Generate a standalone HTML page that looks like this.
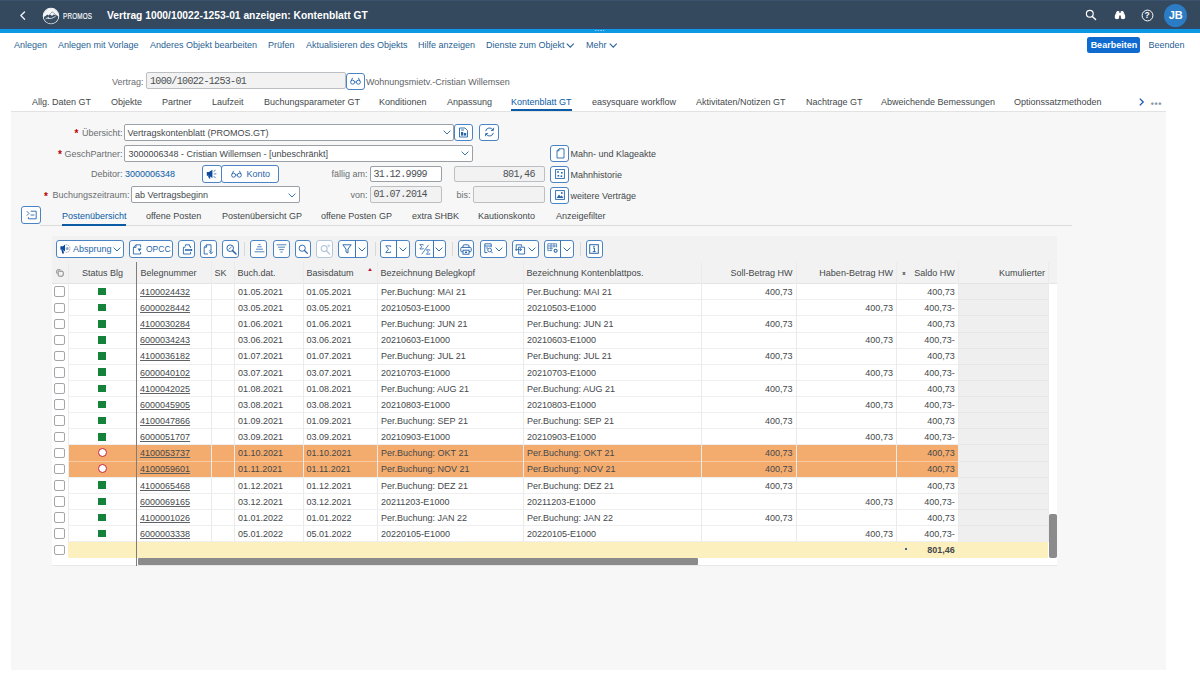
<!DOCTYPE html>
<html lang="de"><head><meta charset="utf-8"><title>Vertrag 1000/10022-1253-01 anzeigen: Kontenblatt GT</title>
<style>
*{box-sizing:border-box;margin:0;padding:0}
html,body{width:1200px;height:675px;overflow:hidden;background:#fff}
body{position:relative;font-family:"Liberation Sans",sans-serif;font-size:9px;color:#44484b;line-height:12px}
.a{position:absolute;white-space:nowrap}
.r{text-align:right}
.m{font-family:"Liberation Mono",monospace;font-size:10px;letter-spacing:-0.66px;color:#4d5154}
.lnk{color:#0a5aa6}
.tb{color:#2a5f94}
.lab{color:#6a6d70}
.req{color:#bb0000;font-weight:bold;font-size:10px}
.btn{position:absolute;border:1px solid #4a84c4;border-radius:3px;background:#fff;color:#2766ab}
.inp{position:absolute;border:1px solid #9aa0a6;border-radius:2px;background:#fff}
.ro{background:#f2f2f2;border-color:#bcbfc2}
.cb{position:absolute;width:11px;height:10.5px;border:1px solid #a3a6a9;border-radius:2px;background:#fff;left:54px}
.gs{position:absolute;width:7.8px;height:7.5px;background:#14823b;left:98.4px}
.oc{position:absolute;width:9px;height:9px;border:1.4px solid #c4233a;border-radius:50%;background:#fff;left:97.5px}
.c{position:absolute;white-space:nowrap;color:#44484b}
.u{text-decoration:underline;text-underline-offset:1px;text-decoration-thickness:0.8px;text-decoration-color:#5f6366}
.hl{position:absolute;height:1px;background:#efefef;left:68px;width:980px}
.vl{position:absolute;width:1px;background:#ebebeb}
svg{position:absolute;overflow:visible}
</style></head><body>

<div class="a" style="left:0;top:0;width:1200px;height:29.4px;background:#34495e"></div>
<div class="a" style="left:0;top:0;width:1200px;height:1.4px;background:#3b5370"></div>
<div class="a" style="left:0;top:26.5px;width:1200px;height:2.5px;background:#31486a"></div>
<div class="a" style="left:0;top:29.2px;width:1200px;height:3.7px;background:#0d99e2"></div>
<div class="a" style="left:594.8px;top:26px;font-size:6px;line-height:6px;letter-spacing:0.9px;color:#e8f4fd;font-weight:bold">....</div>
<svg style="left:19.3px;top:10.6px" width="7.4" height="9.2" viewBox="0 0 8 10"><path d="M6 1 L2 5 L6 9" fill="none" stroke="#eef2fb" stroke-width="1.5" stroke-linecap="round" stroke-linejoin="round"/></svg>
<svg style="left:42.2px;top:6.8px" width="18" height="18" viewBox="0 0 18 18"><defs><clipPath id="lc"><circle cx="9" cy="9" r="7.4"/></clipPath></defs><circle cx="9" cy="9" r="7.7" fill="#3a4e63" stroke="#f4f6f8" stroke-width="1.1"/><g clip-path="url(#lc)"><rect x="0" y="0" width="18" height="9.6" fill="#f4f6f8"/><path d="M0.5 12 L5.2 7.6 L6.6 8.6 L10.2 4.6 L12.6 6.6 L17.5 10.4 V18 H0.5 Z" fill="#3a4e63"/><path d="M7.4 7.8 L10.2 4.9 L12.4 6.8 L15 8.8 L11.6 7.6 L10 9 L8.8 7.8 Z" fill="#f4f6f8"/><path d="M3.6 11.8 L6.8 10.2 L5.8 11.6 Q9.5 12.2 13.6 9.4" fill="none" stroke="#f4f6f8" stroke-width="0.8"/></g></svg>
<div class="a" id="promos" style="left:63px;top:10px;font-size:9.5px;color:#f2f4f6;letter-spacing:0.3px;transform:scaleX(0.665);transform-origin:0 0;-webkit-text-stroke:0.2px #f2f4f6">PROMOS</div>
<div class="a" id="title" style="left:107px;top:8.6px;font-size:10.28px;font-weight:bold;color:#fff;line-height:14px">Vertrag 1000/10022-1253-01 anzeigen: Kontenblatt GT</div>
<svg style="left:1085px;top:9px" width="12" height="12" viewBox="0 0 12 12"><circle cx="4.8" cy="4.8" r="3.4" fill="none" stroke="#fff" stroke-width="1.2"/><path d="M7.4 7.4 L10.6 10.6" stroke="#fff" stroke-width="1.4" stroke-linecap="round"/></svg>
<svg style="left:1113.5px;top:9.5px" width="12" height="10" viewBox="0 0 12 10"><path d="M1.2 6 L3 1.5 L5 1.5 L5 6 M10.8 6 L9 1.5 L7 1.5 L7 6" fill="#fff" stroke="#fff" stroke-width="0.8"/><circle cx="3" cy="7" r="2.3" fill="#fff"/><circle cx="9" cy="7" r="2.3" fill="#fff"/><rect x="4.6" y="3" width="2.8" height="2.4" fill="#fff"/></svg>
<svg style="left:1141px;top:8.5px" width="13" height="13" viewBox="0 0 13 13"><circle cx="6.5" cy="6.5" r="5.4" fill="none" stroke="#fff" stroke-width="1"/></svg>
<div class="a" style="left:1144.6px;top:9.6px;font-size:8.5px;font-weight:bold;color:#fff;line-height:11px">?</div>
<div class="a" style="left:1164px;top:3.5px;width:23.4px;height:23.4px;border-radius:50%;background:#2b7bc5"></div>
<div class="a" style="left:1164px;top:8px;width:23.5px;text-align:center;font-size:11px;font-weight:bold;color:#fff;line-height:14px;letter-spacing:-0.1px">JB</div>
<div class="a tb" style="left:14px;top:38.9px">Anlegen</div>
<div class="a tb" style="left:58px;top:38.9px">Anlegen mit Vorlage</div>
<div class="a tb" style="left:150px;top:38.9px">Anderes Objekt bearbeiten</div>
<div class="a tb" style="left:268px;top:38.9px">Prüfen</div>
<div class="a tb" style="left:306px;top:38.9px">Aktualisieren des Objekts</div>
<div class="a tb" style="left:418px;top:38.9px">Hilfe anzeigen</div>
<div class="a tb" style="left:486px;top:38.9px">Dienste zum Objekt</div>
<div class="a tb" style="left:586px;top:38.9px">Mehr</div>
<svg style="left:566.2px;top:42.6px" width="8.5" height="5.3" viewBox="0 0 8 5"><path d="M0.7 0.7 L4 4 L7.3 0.7" fill="none" stroke="#2a5f94" stroke-width="1"/></svg>
<svg style="left:608.8px;top:42.6px" width="8.5" height="5.3" viewBox="0 0 8 5"><path d="M0.7 0.7 L4 4 L7.3 0.7" fill="none" stroke="#2a5f94" stroke-width="1"/></svg>
<div class="a" style="left:1087.4px;top:36.8px;width:53px;height:16px;border-radius:2.5px;background:#0f6bd0"></div>
<div class="a" style="left:1087.4px;top:39.3px;width:53px;text-align:center;font-weight:bold;color:#fff;font-size:9px">Bearbeiten</div>
<div class="a tb" style="left:1148.5px;top:38.8px">Beenden</div>
<div class="a lab r" style="left:80px;width:63.5px;top:75.5px">Vertrag:</div>
<div class="inp ro" style="left:146px;top:72.4px;width:200px;height:17px"></div>
<div class="a m" style="left:150px;top:75.6px">1000/10022-1253-01</div>
<div class="btn" style="left:346px;top:72.5px;width:18.5px;height:17.5px"></div>
<svg style="left:350px;top:77px" width="11" height="8" viewBox="0 0 11 8"><circle cx="2.6" cy="5.2" r="2" fill="none" stroke="#2766ab" stroke-width="0.9"/><circle cx="8.4" cy="5.2" r="2" fill="none" stroke="#2766ab" stroke-width="0.9"/><path d="M1 4.2 L2.6 0.8 M10 4.2 L8.4 0.8 M4.6 5 L6.4 5" fill="none" stroke="#2766ab" stroke-width="0.9"/></svg>
<div class="a" style="left:366px;top:75.5px;color:#606366">Wohnungsmietv.-Cristian Willemsen</div>
<div class="a " style="left:32px;top:95.5px">Allg. Daten GT</div>
<div class="a " style="left:111px;top:95.5px">Objekte</div>
<div class="a " style="left:162px;top:95.5px">Partner</div>
<div class="a " style="left:212px;top:95.5px">Laufzeit</div>
<div class="a " style="left:264px;top:95.5px">Buchungsparameter GT</div>
<div class="a " style="left:379px;top:95.5px">Konditionen</div>
<div class="a " style="left:447px;top:95.5px">Anpassung</div>
<div class="a lnk" style="left:511px;top:95.5px">Kontenblatt GT</div>
<div class="a " style="left:592px;top:95.5px">easysquare workflow</div>
<div class="a " style="left:696px;top:95.5px">Aktivitaten/Notizen GT</div>
<div class="a " style="left:806px;top:95.5px">Nachtrage GT</div>
<div class="a " style="left:881px;top:95.5px">Abweichende Bemessungen</div>
<div class="a " style="left:1014px;top:95.5px">Optionssatzmethoden</div>
<div class="a" style="left:511px;top:108.6px;width:61px;height:2.4px;background:#0a5aa6"></div>
<svg style="left:1139.4px;top:97.6px" width="5" height="8" viewBox="0 0 5 8"><path d="M0.8 0.6 L4.2 4 L0.8 7.4" fill="none" stroke="#1558ae" stroke-width="1.3"/></svg>
<div class="a" style="left:1150.8px;top:98.3px;font-size:9px;letter-spacing:0.55px;font-weight:bold;color:#8c96a8;line-height:12px">•••</div>
<div class="a" style="left:11px;top:111px;width:1154.5px;height:558.5px;background:#f7f7f7;border-top:1px solid #e2e2e2"></div>
<div class="a req" style="left:74.5px;top:127.5px">*</div>
<div class="a lab r" style="left:60px;width:62.5px;top:126.8px">Übersicht:</div>
<div class="inp" style="left:124px;top:124.3px;width:329.5px;height:16.5px"></div>
<div class="a" style="left:127.5px;top:126.8px">Vertragskontenblatt (PROMOS.GT)</div>
<svg style="left:442.5px;top:130px" width="8" height="5" viewBox="0 0 8 5"><path d="M0.6 0.6 L4 4 L7.4 0.6" fill="none" stroke="#2766ab" stroke-width="0.9"/></svg>
<div class="btn" style="left:453.6px;top:123.8px;width:19px;height:17.5px"></div>
<svg style="left:458px;top:127px" width="11" height="11" viewBox="0 0 11 11"><path d="M1.5 1 H7 L9.5 3.5 V10 H1.5 Z" fill="none" stroke="#2766ab" stroke-width="0.9"/><rect x="3" y="5" width="2.2" height="3.6" fill="#2766ab"/><rect x="5.8" y="6" width="2.4" height="2.6" fill="#2766ab"/><path d="M3 3 H6" stroke="#2766ab" stroke-width="0.9"/></svg>
<div class="btn" style="left:479.4px;top:123.8px;width:19.2px;height:17.5px"></div>
<svg style="left:484px;top:127.3px" width="11" height="10" viewBox="0 0 11 10"><path d="M1.6 4.2 A4 4 0 0 1 9 3 M9.4 5.8 A4 4 0 0 1 2 7" fill="none" stroke="#2766ab" stroke-width="0.95"/><path d="M9.4 0.8 V3.4 H6.9 M1.6 9.2 V6.6 H4.1" fill="none" stroke="#2766ab" stroke-width="0.95"/></svg>
<div class="a req" style="left:58px;top:148.5px">*</div>
<div class="a lab r" style="left:50px;width:72.5px;top:147.7px">GeschPartner:</div>
<div class="inp" style="left:124px;top:145px;width:348.6px;height:16.5px"></div>
<div class="a" style="left:128.5px;top:147.7px">3000006348 - Cristian Willemsen - [unbeschränkt]</div>
<svg style="left:461.3px;top:151px" width="8" height="5" viewBox="0 0 8 5"><path d="M0.6 0.6 L4 4 L7.4 0.6" fill="none" stroke="#2766ab" stroke-width="0.9"/></svg>
<div class="a lab r" style="left:60px;width:62.5px;top:168.3px">Debitor:</div>
<div class="a lnk" style="left:125px;top:168.3px">3000006348</div>
<div class="btn" style="left:202.2px;top:165px;width:19.4px;height:17.6px"></div>
<svg style="left:206px;top:169px" width="12" height="10" viewBox="0 0 12 10"><path d="M0.8 3 H3 L6.4 0.8 V9 L3 6.8 H0.8 Z" fill="#0f4a9e"/><path d="M2 6.8 L3 9.6 H4.4 L3.8 6.8" fill="#0f4a9e"/><path d="M7.6 2.4 L9.6 1.2 M7.8 4.9 H10.4 M7.6 7.4 L9.6 8.6" stroke="#2766ab" stroke-width="0.8" fill="none"/></svg>
<div class="btn" style="left:221.2px;top:165px;width:58.2px;height:17.6px"></div>
<svg style="left:231px;top:170px" width="11" height="8" viewBox="0 0 11 8"><circle cx="2.6" cy="5.2" r="2" fill="none" stroke="#2766ab" stroke-width="0.9"/><circle cx="8.4" cy="5.2" r="2" fill="none" stroke="#2766ab" stroke-width="0.9"/><path d="M1 4.2 L2.6 0.8 M10 4.2 L8.4 0.8 M4.6 5 L6.4 5" fill="none" stroke="#2766ab" stroke-width="0.9"/></svg>
<div class="a" style="left:246.5px;top:168.3px;color:#2766ab">Konto</div>
<div class="a lab r" style="left:300px;width:67.5px;top:168.3px">fällig am:</div>
<div class="inp" style="left:370px;top:165.5px;width:71.5px;height:16.5px"></div>
<div class="a m" style="left:373.5px;top:168.6px">31.12.9999</div>
<div class="inp ro" style="left:453.5px;top:165.5px;width:91px;height:16.5px"></div>
<div class="a m r" style="left:460px;width:74.8px;top:168.6px">801,46</div>
<div class="a req" style="left:44px;top:190.5px">*</div>
<div class="a lab r" style="left:40px;width:89.5px;top:189.3px">Buchungszeitraum:</div>
<div class="inp" style="left:131px;top:186.3px;width:168.5px;height:16.5px"></div>
<div class="a" style="left:135px;top:189.3px">ab Vertragsbeginn</div>
<svg style="left:287.5px;top:193px" width="8" height="5" viewBox="0 0 8 5"><path d="M0.6 0.6 L4 4 L7.4 0.6" fill="none" stroke="#2766ab" stroke-width="0.9"/></svg>
<div class="a lab r" style="left:300px;width:67.5px;top:189.3px">von:</div>
<div class="inp ro" style="left:370px;top:186.3px;width:71.5px;height:16.5px"></div>
<div class="a m" style="left:373.5px;top:189.4px">01.07.2014</div>
<div class="a lab r" style="left:440px;width:30.5px;top:189.3px">bis:</div>
<div class="inp ro" style="left:473px;top:186.3px;width:71.5px;height:16.5px"></div>
<div class="btn" style="left:550.3px;top:144.5px;width:19px;height:17.2px"></div>
<div class="a" style="left:570.4px;top:147.6px">Mahn- und Klageakte</div>
<div class="btn" style="left:550.3px;top:165.5px;width:19px;height:17.2px"></div>
<div class="a" style="left:570.4px;top:168.6px">Mahnhistorie</div>
<div class="btn" style="left:550.3px;top:186.5px;width:19px;height:17.2px"></div>
<div class="a" style="left:570.4px;top:189.6px">weitere Verträge</div>
<svg style="left:555.6px;top:148px" width="9" height="11" viewBox="0 0 9 11"><path d="M3 0.8 H8 V10 H1 V2.8 Z M3 0.8 V2.8 H1" fill="none" stroke="#2766ab" stroke-width="0.9"/></svg>
<svg style="left:555px;top:169.3px" width="10" height="10" viewBox="0 0 10 10"><rect x="0.6" y="0.6" width="8.8" height="8.8" fill="none" stroke="#2766ab" stroke-width="0.9"/><rect x="2.2" y="2.2" width="1.6" height="1.6" fill="#2766ab"/><rect x="6" y="3" width="1.6" height="1.6" fill="#2766ab"/><rect x="2.6" y="6" width="1.6" height="1.6" fill="#2766ab"/><rect x="5.6" y="6.4" width="1.6" height="1.6" fill="#2766ab"/></svg>
<svg style="left:555px;top:190.3px" width="10" height="10" viewBox="0 0 10 10"><rect x="0.6" y="0.6" width="8.8" height="8.8" fill="none" stroke="#2766ab" stroke-width="0.9"/><path d="M1.6 8 L4 4.6 L5.6 6.4 L6.8 5.4 L8.4 8 Z" fill="#2766ab"/><circle cx="6.8" cy="3" r="0.9" fill="#2766ab"/></svg>
<div class="btn" style="left:21px;top:206px;width:19.5px;height:18px"></div>
<svg style="left:25.5px;top:210px" width="11" height="10" viewBox="0 0 11 10"><path d="M0.8 1.2 L3 3.4 L0.8 5.6" fill="none" stroke="#2766ab" stroke-width="0.9"/><path d="M4.6 1.2 H10.2 V8.8 H2.4 V7.2 M4.6 5 H8.4" fill="none" stroke="#2766ab" stroke-width="0.9"/></svg>
<div class="a lnk" style="left:62px;top:209.9px">Postenübersicht</div>
<div class="a " style="left:146px;top:209.9px">offene Posten</div>
<div class="a " style="left:222px;top:209.9px">Postenübersicht GP</div>
<div class="a " style="left:321px;top:209.9px">offene Posten GP</div>
<div class="a " style="left:412px;top:209.9px">extra SHBK</div>
<div class="a " style="left:478px;top:209.9px">Kautionskonto</div>
<div class="a " style="left:556px;top:209.9px">Anzeigefilter</div>
<div class="a" style="left:40px;top:225px;width:1032px;height:1px;background:#dcdcdc"></div>
<div class="a" style="left:62px;top:223.5px;width:63.5px;height:2.3px;background:#0a5aa6"></div>
<div class="a" style="left:52px;top:236px;width:1005px;height:26px;background:#f2f2f2"></div>
<div class="btn" style="left:56.3px;top:240.2px;width:68.0px;height:17.5px;border-color:#4a84c4"></div>
<svg style="left:59.5px;top:243.8px" width="11" height="10" viewBox="0 0 11 10"><path d="M0.4 2.2 H3 L5 0.6 V7.4 L3 5.8 H0.4 Z" fill="#0f4a9e"/><path d="M1.4 5.8 L2.2 9.6 H4 L3.4 5.8" fill="#0f4a9e"/><path d="M5.6 1 Q8.4 0.4 9.6 3 Q10.6 5.6 8.6 7.6 Q7 8.8 5.6 8" fill="none" stroke="#8fa6c4" stroke-width="1" stroke-dasharray="1.6 0.7"/><circle cx="7.2" cy="4.4" r="1.5" fill="#8fa6c4"/></svg>
<div class="a" style="left:73px;top:242.8px;color:#2766ab">Absprung</div>
<svg style="left:113.3px;top:246.8px" width="8" height="5" viewBox="0 0 8 5"><path d="M0.6 0.6 L4 4 L7.4 0.6" fill="none" stroke="#2766ab" stroke-width="0.95"/></svg>
<div class="btn" style="left:129.2px;top:240.2px;width:44.0px;height:17.5px;border-color:#4a84c4"></div>
<svg style="left:131.8px;top:243.6px" width="11" height="11" viewBox="0 0 11 11"><path d="M4 0.8 H8.6 V3.4 M8.6 8 V10 H1.4 V3.4 L4 0.8 V3.4 H1.4" fill="none" stroke="#2766ab" stroke-width="0.9"/><path d="M5.6 4.6 L7.4 7.4 L9.6 4.6 Z" fill="#2766ab"/></svg>
<div class="a" style="left:146px;top:242.8px;color:#2766ab;font-size:8.5px">OPCC</div>
<div class="btn" style="left:178.3px;top:240.2px;width:16.5px;height:17.5px;border-color:#4a84c4"></div>
<svg style="left:181.5px;top:243.5px" width="11" height="11" viewBox="0 0 11 11"><path d="M3.4 2.4 V0.8 H7.6 V2.4 M1.4 3.2 H3.4 M1.4 3.2 V10 H8.6 V7.8 M7.6 2.4 H8.6 V4" fill="none" stroke="#2766ab" stroke-width="0.9"/><path d="M3.2 5 H10.2 V7 H3.2 Z" fill="#2766ab"/><path d="M4 6 H9" stroke="#fff" stroke-width="0.5"/></svg>
<div class="btn" style="left:200px;top:240.2px;width:16.8px;height:17.5px;border-color:#4a84c4"></div>
<svg style="left:203.3px;top:243.5px" width="11" height="11" viewBox="0 0 11 11"><path d="M8 6 V0.8 H3.6 L1.2 3.2 V10 H5" fill="none" stroke="#2766ab" stroke-width="0.9"/><path d="M3.6 0.8 V3.2 H1.2" fill="none" stroke="#2766ab" stroke-width="0.9"/><path d="M8 5.6 V9.6 M6.2 7.8 L8 9.8 L9.8 7.8 M6.2 6 L8 8" fill="none" stroke="#2766ab" stroke-width="0.8"/></svg>
<div class="btn" style="left:222.2px;top:240.2px;width:17.0px;height:17.5px;border-color:#4a84c4"></div>
<svg style="left:225.5px;top:243.8px" width="11" height="11" viewBox="0 0 11 11"><circle cx="4.2" cy="4.2" r="3.3" fill="none" stroke="#2766ab" stroke-width="1"/><path d="M6.6 6.6 L10 10" stroke="#2766ab" stroke-width="1.5" stroke-linecap="round"/><path d="M2.6 5.4 L5.6 2.8" stroke="#2766ab" stroke-width="0.8"/></svg>
<div class="a" style="left:244.3px;top:241.5px;width:1px;height:14.5px;background:#d9d9d9"></div>
<div class="btn" style="left:250.3px;top:240.2px;width:17.2px;height:17.5px;border-color:#4a84c4"></div>
<svg style="left:253.6px;top:244.4px" width="11" height="9" viewBox="0 0 11 9"><path d="M4.4 0.6 H6.6 M3.2 2.8 H7.8 M2 5.2 H9 M0.6 7.8 H10.4" stroke="#2766ab" stroke-width="0.8" fill="none"/></svg>
<div class="btn" style="left:272.5px;top:240.2px;width:17.1px;height:17.5px;border-color:#4a84c4"></div>
<svg style="left:275.6px;top:244.4px" width="11" height="9" viewBox="0 0 11 9"><path d="M0.6 0.8 H10.4 M2 3.2 H9 M3.2 5.6 H7.8 M4.4 8 H6.6" stroke="#2766ab" stroke-width="0.8" fill="none"/></svg>
<div class="btn" style="left:294.7px;top:240.2px;width:16.7px;height:17.5px;border-color:#4a84c4"></div>
<svg style="left:298px;top:243.8px" width="11" height="11" viewBox="0 0 11 11"><circle cx="4.2" cy="4.2" r="3.1" fill="none" stroke="#2766ab" stroke-width="0.95"/><path d="M6.5 6.5 L9.4 9.4" stroke="#2766ab" stroke-width="1.3" stroke-linecap="round"/></svg>
<div class="btn" style="left:316.3px;top:240.2px;width:16.3px;height:17.5px;border-color:#b5c7dc"></div>
<svg style="left:319.6px;top:243.8px" width="11" height="11" viewBox="0 0 11 11"><circle cx="4.2" cy="4.6" r="3" fill="none" stroke="#b5c7dc" stroke-width="1.1"/><path d="M6.4 6.8 L9.6 10" stroke="#b5c7dc" stroke-width="1.4" stroke-linecap="round"/><path d="M8.8 0.4 V3.4 M7.3 1.9 H10.3" stroke="#b5c7dc" stroke-width="0.8"/></svg>
<div class="btn" style="left:338.3px;top:240.2px;width:30.1px;height:17.5px;border-color:#4a84c4"></div>
<div class="a" style="left:354.7px;top:240.2px;width:1px;height:17.5px;background:#3b78b8"></div>
<svg style="left:341.8px;top:244.2px" width="10" height="10" viewBox="0 0 10 10"><path d="M0.8 0.8 H9.2 L6 5 V9 L4 8 V5 Z" fill="none" stroke="#2766ab" stroke-width="0.95" stroke-linejoin="round"/></svg>
<svg style="left:357.6px;top:246.8px" width="8" height="5" viewBox="0 0 8 5"><path d="M0.6 0.6 L4 4 L7.4 0.6" fill="none" stroke="#2766ab" stroke-width="0.95"/></svg>
<div class="a" style="left:374.7px;top:241.5px;width:1px;height:14.5px;background:#d9d9d9"></div>
<div class="btn" style="left:380px;top:240.2px;width:30.4px;height:17.5px;border-color:#4a84c4"></div>
<div class="a" style="left:396.3px;top:240.2px;width:1px;height:17.5px;background:#3b78b8"></div>
<svg style="left:385px;top:244.6px" width="6.4" height="8.4" viewBox="0 0 8 10"><path d="M7 2.2 V0.8 H1 L4.4 5 L1 9.2 H7 V7.8" fill="none" stroke="#2766ab" stroke-width="1.1" stroke-linejoin="miter"/></svg>
<svg style="left:399.4px;top:246.8px" width="8" height="5" viewBox="0 0 8 5"><path d="M0.6 0.6 L4 4 L7.4 0.6" fill="none" stroke="#2766ab" stroke-width="0.95"/></svg>
<div class="btn" style="left:415.3px;top:240.2px;width:30.6px;height:17.5px;border-color:#4a84c4"></div>
<div class="a" style="left:432.5px;top:240.2px;width:1px;height:17.5px;background:#3b78b8"></div>
<svg style="left:418.5px;top:243.6px" width="12" height="11" viewBox="0 0 12 11"><path d="M4.2 1.4 V0.6 H0.8 L2.8 2.8 L0.8 5 H4.2 V4.2" fill="none" stroke="#2766ab" stroke-width="0.8"/><path d="M9.6 0.8 L2.8 10.2" stroke="#2766ab" stroke-width="0.8"/><path d="M10.8 6.6 V5.8 H7.4 L9.4 8 L7.4 10.2 H10.8 V9.4" fill="none" stroke="#2766ab" stroke-width="0.8"/></svg>
<svg style="left:435.4px;top:246.8px" width="8" height="5" viewBox="0 0 8 5"><path d="M0.6 0.6 L4 4 L7.4 0.6" fill="none" stroke="#2766ab" stroke-width="0.95"/></svg>
<div class="a" style="left:451.7px;top:241.5px;width:1px;height:14.5px;background:#d9d9d9"></div>
<div class="btn" style="left:457.5px;top:240.2px;width:16.8px;height:17.5px;border-color:#4a84c4"></div>
<svg style="left:460.4px;top:243.6px" width="12" height="11" viewBox="0 0 12 11"><path d="M3 3.4 V2 Q3 0.8 4.2 0.8 H7.8 Q9 0.8 9 2 V3.4" fill="none" stroke="#2766ab" stroke-width="0.95"/><rect x="0.8" y="3.4" width="10.4" height="4.4" rx="1" fill="none" stroke="#2766ab" stroke-width="0.95"/><rect x="3" y="6.2" width="6" height="4" fill="#fff" stroke="#2766ab" stroke-width="0.95"/><rect x="5" y="7.6" width="2" height="1.4" fill="#2766ab"/></svg>
<div class="btn" style="left:479.7px;top:240.2px;width:27.1px;height:17.5px;border-color:#4a84c4"></div>
<svg style="left:484px;top:243.4px" width="9" height="11" viewBox="0 0 9 11"><path d="M0.8 0.8 H7.2 M0.8 0.8 V9.6 H3.4 M7.2 0.8 V4.2 M0.8 3 H7.2 M2.2 5 H4" fill="none" stroke="#2766ab" stroke-width="0.9"/><circle cx="5.6" cy="7" r="1.9" fill="none" stroke="#2766ab" stroke-width="0.85"/><path d="M7 8.4 L8.6 10.2" stroke="#2766ab" stroke-width="1"/></svg>
<svg style="left:495.4px;top:246.8px" width="8" height="5" viewBox="0 0 8 5"><path d="M0.6 0.6 L4 4 L7.4 0.6" fill="none" stroke="#2766ab" stroke-width="0.95"/></svg>
<div class="btn" style="left:511.7px;top:240.2px;width:27.1px;height:17.5px;border-color:#4a84c4"></div>
<svg style="left:515px;top:243.6px" width="11" height="11" viewBox="0 0 11 11"><path d="M1.2 7 V0.8 H6.6 V2.6" fill="none" stroke="#2766ab" stroke-width="0.9"/><path d="M3.6 3.2 H9.6 V10 H3.6 Z" fill="none" stroke="#2766ab" stroke-width="0.9"/><path d="M0.4 5.6 H6.4 M4.8 4 L6.6 5.6 L4.8 7.2" fill="none" stroke="#2766ab" stroke-width="0.85"/></svg>
<svg style="left:527.6px;top:246.8px" width="8" height="5" viewBox="0 0 8 5"><path d="M0.6 0.6 L4 4 L7.4 0.6" fill="none" stroke="#2766ab" stroke-width="0.95"/></svg>
<div class="btn" style="left:543.8px;top:240.2px;width:30.5px;height:17.5px;border-color:#4a84c4"></div>
<div class="a" style="left:560px;top:240.2px;width:1px;height:17.5px;background:#3b78b8"></div>
<svg style="left:546.6px;top:243.4px" width="12" height="11" viewBox="0 0 12 11"><path d="M0.8 0.8 H9.6 V4.4 M0.8 0.8 V7.6 H5 M0.8 3 H9.6 M0.8 5.2 H6 M4 0.8 V7.6 M7 0.8 V4.6" fill="none" stroke="#2766ab" stroke-width="0.7"/><circle cx="8.6" cy="7.8" r="1.5" fill="#fff" stroke="#2766ab" stroke-width="1.1"/></svg>
<svg style="left:563.2px;top:246.8px" width="8" height="5" viewBox="0 0 8 5"><path d="M0.6 0.6 L4 4 L7.4 0.6" fill="none" stroke="#2766ab" stroke-width="0.95"/></svg>
<div class="a" style="left:580px;top:241.5px;width:1px;height:14.5px;background:#d9d9d9"></div>
<div class="btn" style="left:585.8px;top:240.2px;width:16.8px;height:17.5px;border-color:#4a84c4"></div>
<svg style="left:589.4px;top:243.8px" width="10" height="10" viewBox="0 0 10 10"><rect x="0.7" y="0.7" width="8.6" height="8.6" fill="none" stroke="#2766ab" stroke-width="1"/><path d="M4 4 H5.4 V7.6 M3.8 7.6 H6.6" fill="none" stroke="#2766ab" stroke-width="1"/><rect x="4.4" y="1.9" width="1.2" height="1.2" fill="#2766ab"/></svg>
<div class="a" style="left:52px;top:262px;width:1005px;height:304.1px;background:#fff;border-bottom:1px solid #e8e8e8"></div>
<div class="a" style="left:52px;top:262px;width:1005px;height:21.6px;background:#f2f2f2;border-bottom:1px solid #e4e4e4"></div>
<div class="a" style="left:958px;top:283.6px;width:90px;height:258.1px;background:#efefef"></div>
<div class="a" style="left:68px;top:444.9px;width:890px;height:32.3px;background:#f4ac6e"></div>
<div class="a" style="left:68px;top:541.7px;width:980px;height:16.1px;background:#fdf0bf"></div>
<div class="hl" style="top:299.2px;background:#efefef"></div>
<div class="hl" style="top:299.2px;background:#e7e7e7;left:958px;width:90px"></div>
<div class="hl" style="top:315.4px;background:#efefef"></div>
<div class="hl" style="top:315.4px;background:#e7e7e7;left:958px;width:90px"></div>
<div class="hl" style="top:331.5px;background:#efefef"></div>
<div class="hl" style="top:331.5px;background:#e7e7e7;left:958px;width:90px"></div>
<div class="hl" style="top:347.6px;background:#efefef"></div>
<div class="hl" style="top:347.6px;background:#e7e7e7;left:958px;width:90px"></div>
<div class="hl" style="top:363.8px;background:#efefef"></div>
<div class="hl" style="top:363.8px;background:#e7e7e7;left:958px;width:90px"></div>
<div class="hl" style="top:379.9px;background:#efefef"></div>
<div class="hl" style="top:379.9px;background:#e7e7e7;left:958px;width:90px"></div>
<div class="hl" style="top:396.0px;background:#efefef"></div>
<div class="hl" style="top:396.0px;background:#e7e7e7;left:958px;width:90px"></div>
<div class="hl" style="top:412.1px;background:#efefef"></div>
<div class="hl" style="top:412.1px;background:#e7e7e7;left:958px;width:90px"></div>
<div class="hl" style="top:428.3px;background:#efefef"></div>
<div class="hl" style="top:428.3px;background:#e7e7e7;left:958px;width:90px"></div>
<div class="hl" style="top:444.4px;background:#efefef"></div>
<div class="hl" style="top:444.4px;background:#e7e7e7;left:958px;width:90px"></div>
<div class="hl" style="top:460.5px;background:#efefef"></div>
<div class="hl" style="top:460.5px;background:#e7e7e7;left:958px;width:90px"></div>
<div class="hl" style="top:460.5px;background:#f8caa2;width:890px"></div>
<div class="hl" style="top:476.7px;background:#efefef"></div>
<div class="hl" style="top:476.7px;background:#e7e7e7;left:958px;width:90px"></div>
<div class="hl" style="top:492.8px;background:#efefef"></div>
<div class="hl" style="top:492.8px;background:#e7e7e7;left:958px;width:90px"></div>
<div class="hl" style="top:508.9px;background:#efefef"></div>
<div class="hl" style="top:508.9px;background:#e7e7e7;left:958px;width:90px"></div>
<div class="hl" style="top:525.0px;background:#efefef"></div>
<div class="hl" style="top:525.0px;background:#e7e7e7;left:958px;width:90px"></div>
<div class="hl" style="top:541.2px;background:#efefef"></div>
<div class="vl" style="left:68px;top:262px;height:279.7px"></div>
<div class="vl" style="left:211px;top:262px;height:279.7px"></div>
<div class="vl" style="left:234px;top:262px;height:279.7px"></div>
<div class="vl" style="left:303px;top:262px;height:279.7px"></div>
<div class="vl" style="left:377px;top:262px;height:279.7px"></div>
<div class="vl" style="left:523px;top:262px;height:279.7px"></div>
<div class="vl" style="left:701px;top:262px;height:279.7px"></div>
<div class="vl" style="left:795.6px;top:262px;height:279.7px"></div>
<div class="vl" style="left:896.4px;top:262px;height:279.7px"></div>
<div class="vl" style="left:957.8px;top:262px;height:279.7px"></div>
<div class="vl" style="left:1048px;top:262px;height:279.7px"></div>
<div class="vl" style="left:136.3px;top:262px;height:303.6px;background:#7d7d7d"></div>
<svg style="left:55.5px;top:268.5px" width="8" height="8" viewBox="0 0 8 8"><rect x="2.2" y="2.2" width="5" height="5" rx="1" fill="#f2f2f2" stroke="#777" stroke-width="0.9"/><path d="M0.8 4.6 V1.6 Q0.8 0.8 1.6 0.8 H4.6" fill="none" stroke="#777" stroke-width="0.9"/></svg>
<div class="c" style="left:68px;width:69px;text-align:center;top:267px">Status Blg</div>
<div class="c" style="left:140.5px;top:267px">Belegnummer</div>
<div class="c" style="left:214.5px;top:267px">SK</div>
<div class="c" style="left:237.5px;top:267px">Buch.dat.</div>
<div class="c" style="left:306.5px;top:267px">Basisdatum</div>
<div class="c" style="left:380.5px;top:267px">Bezeichnung Belegkopf</div>
<div class="c" style="left:526.5px;top:267px">Bezeichnung Kontenblattpos.</div>
<div class="c r" style="left:701px;width:91.60000000000002px;top:267px">Soll-Betrag HW</div>
<div class="c r" style="left:795.6px;width:97.29999999999995px;top:267px">Haben-Betrag HW</div>
<div class="c r" style="left:896.4px;width:58.39999999999998px;top:267px">Saldo HW</div>
<div class="c r" style="left:957.8px;width:87.20000000000005px;top:267px">Kumulierter</div>
<svg style="left:367.5px;top:267.5px" width="4" height="3" viewBox="0 0 5 4"><path d="M0 4 L2.5 0 L5 4 Z" fill="#c0142e"/></svg>
<div class="c" style="left:902.2px;top:267px;font-size:6px;font-weight:bold;color:#333">x</div>
<div class="cb" style="top:286.4px"></div>
<div class="gs" style="top:287.8px"></div>
<div class="c u" style="left:140px;top:285.9px">4100024432</div>
<div class="c" style="left:238px;top:285.9px">01.05.2021</div>
<div class="c" style="left:306.5px;top:285.9px">01.05.2021</div>
<div class="c" style="left:381px;top:285.9px">Per.Buchung: MAI 21</div>
<div class="c" style="left:527px;top:285.9px">Per.Buchung: MAI 21</div>
<div class="c r" style="left:701px;width:91.60000000000002px;top:285.9px">400,73</div>
<div class="c r" style="left:896.4px;width:58.39999999999998px;top:285.9px">400,73</div>
<div class="cb" style="top:302.5px"></div>
<div class="gs" style="top:303.9px"></div>
<div class="c u" style="left:140px;top:302.0px">6000028442</div>
<div class="c" style="left:238px;top:302.0px">03.05.2021</div>
<div class="c" style="left:306.5px;top:302.0px">03.05.2021</div>
<div class="c" style="left:381px;top:302.0px">20210503-E1000</div>
<div class="c" style="left:527px;top:302.0px">20210503-E1000</div>
<div class="c r" style="left:795.6px;width:97.29999999999995px;top:302.0px">400,73</div>
<div class="c r" style="left:896.4px;width:58.39999999999998px;top:302.0px">400,73-</div>
<div class="cb" style="top:318.7px"></div>
<div class="gs" style="top:320.1px"></div>
<div class="c u" style="left:140px;top:318.2px">4100030284</div>
<div class="c" style="left:238px;top:318.2px">01.06.2021</div>
<div class="c" style="left:306.5px;top:318.2px">01.06.2021</div>
<div class="c" style="left:381px;top:318.2px">Per.Buchung: JUN 21</div>
<div class="c" style="left:527px;top:318.2px">Per.Buchung: JUN 21</div>
<div class="c r" style="left:701px;width:91.60000000000002px;top:318.2px">400,73</div>
<div class="c r" style="left:896.4px;width:58.39999999999998px;top:318.2px">400,73</div>
<div class="cb" style="top:334.8px"></div>
<div class="gs" style="top:336.2px"></div>
<div class="c u" style="left:140px;top:334.3px">6000034243</div>
<div class="c" style="left:238px;top:334.3px">03.06.2021</div>
<div class="c" style="left:306.5px;top:334.3px">03.06.2021</div>
<div class="c" style="left:381px;top:334.3px">20210603-E1000</div>
<div class="c" style="left:527px;top:334.3px">20210603-E1000</div>
<div class="c r" style="left:795.6px;width:97.29999999999995px;top:334.3px">400,73</div>
<div class="c r" style="left:896.4px;width:58.39999999999998px;top:334.3px">400,73-</div>
<div class="cb" style="top:350.9px"></div>
<div class="gs" style="top:352.3px"></div>
<div class="c u" style="left:140px;top:350.4px">4100036182</div>
<div class="c" style="left:238px;top:350.4px">01.07.2021</div>
<div class="c" style="left:306.5px;top:350.4px">01.07.2021</div>
<div class="c" style="left:381px;top:350.4px">Per.Buchung: JUL 21</div>
<div class="c" style="left:527px;top:350.4px">Per.Buchung: JUL 21</div>
<div class="c r" style="left:701px;width:91.60000000000002px;top:350.4px">400,73</div>
<div class="c r" style="left:896.4px;width:58.39999999999998px;top:350.4px">400,73</div>
<div class="cb" style="top:367.1px"></div>
<div class="gs" style="top:368.4px"></div>
<div class="c u" style="left:140px;top:366.6px">6000040102</div>
<div class="c" style="left:238px;top:366.6px">03.07.2021</div>
<div class="c" style="left:306.5px;top:366.6px">03.07.2021</div>
<div class="c" style="left:381px;top:366.6px">20210703-E1000</div>
<div class="c" style="left:527px;top:366.6px">20210703-E1000</div>
<div class="c r" style="left:795.6px;width:97.29999999999995px;top:366.6px">400,73</div>
<div class="c r" style="left:896.4px;width:58.39999999999998px;top:366.6px">400,73-</div>
<div class="cb" style="top:383.2px"></div>
<div class="gs" style="top:384.6px"></div>
<div class="c u" style="left:140px;top:382.7px">4100042025</div>
<div class="c" style="left:238px;top:382.7px">01.08.2021</div>
<div class="c" style="left:306.5px;top:382.7px">01.08.2021</div>
<div class="c" style="left:381px;top:382.7px">Per.Buchung: AUG 21</div>
<div class="c" style="left:527px;top:382.7px">Per.Buchung: AUG 21</div>
<div class="c r" style="left:701px;width:91.60000000000002px;top:382.7px">400,73</div>
<div class="c r" style="left:896.4px;width:58.39999999999998px;top:382.7px">400,73</div>
<div class="cb" style="top:399.3px"></div>
<div class="gs" style="top:400.7px"></div>
<div class="c u" style="left:140px;top:398.8px">6000045905</div>
<div class="c" style="left:238px;top:398.8px">03.08.2021</div>
<div class="c" style="left:306.5px;top:398.8px">03.08.2021</div>
<div class="c" style="left:381px;top:398.8px">20210803-E1000</div>
<div class="c" style="left:527px;top:398.8px">20210803-E1000</div>
<div class="c r" style="left:795.6px;width:97.29999999999995px;top:398.8px">400,73</div>
<div class="c r" style="left:896.4px;width:58.39999999999998px;top:398.8px">400,73-</div>
<div class="cb" style="top:415.4px"></div>
<div class="gs" style="top:416.8px"></div>
<div class="c u" style="left:140px;top:414.9px">4100047866</div>
<div class="c" style="left:238px;top:414.9px">01.09.2021</div>
<div class="c" style="left:306.5px;top:414.9px">01.09.2021</div>
<div class="c" style="left:381px;top:414.9px">Per.Buchung: SEP 21</div>
<div class="c" style="left:527px;top:414.9px">Per.Buchung: SEP 21</div>
<div class="c r" style="left:701px;width:91.60000000000002px;top:414.9px">400,73</div>
<div class="c r" style="left:896.4px;width:58.39999999999998px;top:414.9px">400,73</div>
<div class="cb" style="top:431.6px"></div>
<div class="gs" style="top:433.0px"></div>
<div class="c u" style="left:140px;top:431.1px">6000051707</div>
<div class="c" style="left:238px;top:431.1px">03.09.2021</div>
<div class="c" style="left:306.5px;top:431.1px">03.09.2021</div>
<div class="c" style="left:381px;top:431.1px">20210903-E1000</div>
<div class="c" style="left:527px;top:431.1px">20210903-E1000</div>
<div class="c r" style="left:795.6px;width:97.29999999999995px;top:431.1px">400,73</div>
<div class="c r" style="left:896.4px;width:58.39999999999998px;top:431.1px">400,73-</div>
<div class="cb" style="top:447.7px"></div>
<div class="oc" style="top:448.3px"></div>
<div class="c u" style="left:140px;top:447.2px">4100053737</div>
<div class="c" style="left:238px;top:447.2px">01.10.2021</div>
<div class="c" style="left:306.5px;top:447.2px">01.10.2021</div>
<div class="c" style="left:381px;top:447.2px">Per.Buchung: OKT 21</div>
<div class="c" style="left:527px;top:447.2px">Per.Buchung: OKT 21</div>
<div class="c r" style="left:701px;width:91.60000000000002px;top:447.2px">400,73</div>
<div class="c r" style="left:896.4px;width:58.39999999999998px;top:447.2px">400,73</div>
<div class="cb" style="top:463.8px"></div>
<div class="oc" style="top:464.4px"></div>
<div class="c u" style="left:140px;top:463.3px">4100059601</div>
<div class="c" style="left:238px;top:463.3px">01.11.2021</div>
<div class="c" style="left:306.5px;top:463.3px">01.11.2021</div>
<div class="c" style="left:381px;top:463.3px">Per.Buchung: NOV 21</div>
<div class="c" style="left:527px;top:463.3px">Per.Buchung: NOV 21</div>
<div class="c r" style="left:701px;width:91.60000000000002px;top:463.3px">400,73</div>
<div class="c r" style="left:896.4px;width:58.39999999999998px;top:463.3px">400,73</div>
<div class="cb" style="top:480.0px"></div>
<div class="gs" style="top:481.4px"></div>
<div class="c u" style="left:140px;top:479.5px">4100065468</div>
<div class="c" style="left:238px;top:479.5px">01.12.2021</div>
<div class="c" style="left:306.5px;top:479.5px">01.12.2021</div>
<div class="c" style="left:381px;top:479.5px">Per.Buchung: DEZ 21</div>
<div class="c" style="left:527px;top:479.5px">Per.Buchung: DEZ 21</div>
<div class="c r" style="left:701px;width:91.60000000000002px;top:479.5px">400,73</div>
<div class="c r" style="left:896.4px;width:58.39999999999998px;top:479.5px">400,73</div>
<div class="cb" style="top:496.1px"></div>
<div class="gs" style="top:497.5px"></div>
<div class="c u" style="left:140px;top:495.6px">6000069165</div>
<div class="c" style="left:238px;top:495.6px">03.12.2021</div>
<div class="c" style="left:306.5px;top:495.6px">03.12.2021</div>
<div class="c" style="left:381px;top:495.6px">20211203-E1000</div>
<div class="c" style="left:527px;top:495.6px">20211203-E1000</div>
<div class="c r" style="left:795.6px;width:97.29999999999995px;top:495.6px">400,73</div>
<div class="c r" style="left:896.4px;width:58.39999999999998px;top:495.6px">400,73-</div>
<div class="cb" style="top:512.2px"></div>
<div class="gs" style="top:513.6px"></div>
<div class="c u" style="left:140px;top:511.7px">4100001026</div>
<div class="c" style="left:238px;top:511.7px">01.01.2022</div>
<div class="c" style="left:306.5px;top:511.7px">01.01.2022</div>
<div class="c" style="left:381px;top:511.7px">Per.Buchung: JAN 22</div>
<div class="c" style="left:527px;top:511.7px">Per.Buchung: JAN 22</div>
<div class="c r" style="left:701px;width:91.60000000000002px;top:511.7px">400,73</div>
<div class="c r" style="left:896.4px;width:58.39999999999998px;top:511.7px">400,73</div>
<div class="cb" style="top:528.3px"></div>
<div class="gs" style="top:529.8px"></div>
<div class="c u" style="left:140px;top:527.8px">6000003338</div>
<div class="c" style="left:238px;top:527.8px">05.01.2022</div>
<div class="c" style="left:306.5px;top:527.8px">05.01.2022</div>
<div class="c" style="left:381px;top:527.8px">20220105-E1000</div>
<div class="c" style="left:527px;top:527.8px">20220105-E1000</div>
<div class="c r" style="left:795.6px;width:97.29999999999995px;top:527.8px">400,73</div>
<div class="c r" style="left:896.4px;width:58.39999999999998px;top:527.8px">400,73-</div>
<div class="cb" style="top:544.5px"></div>
<div class="c r" style="left:896.4px;width:58.39999999999998px;top:544.0px;font-weight:bold">801,46</div>
<div class="a" style="left:904.7px;top:548.1px;width:2.4px;height:2.4px;border-radius:50%;background:#0a2f86"></div>
<div class="a" style="left:138px;top:558.4px;width:559.5px;height:7px;background:#8b8b8b;border-radius:1px"></div>
<div class="a" style="left:1048.5px;top:514px;width:8.5px;height:44px;background:#8b8b8b;border-radius:2px"></div>
</body></html>
